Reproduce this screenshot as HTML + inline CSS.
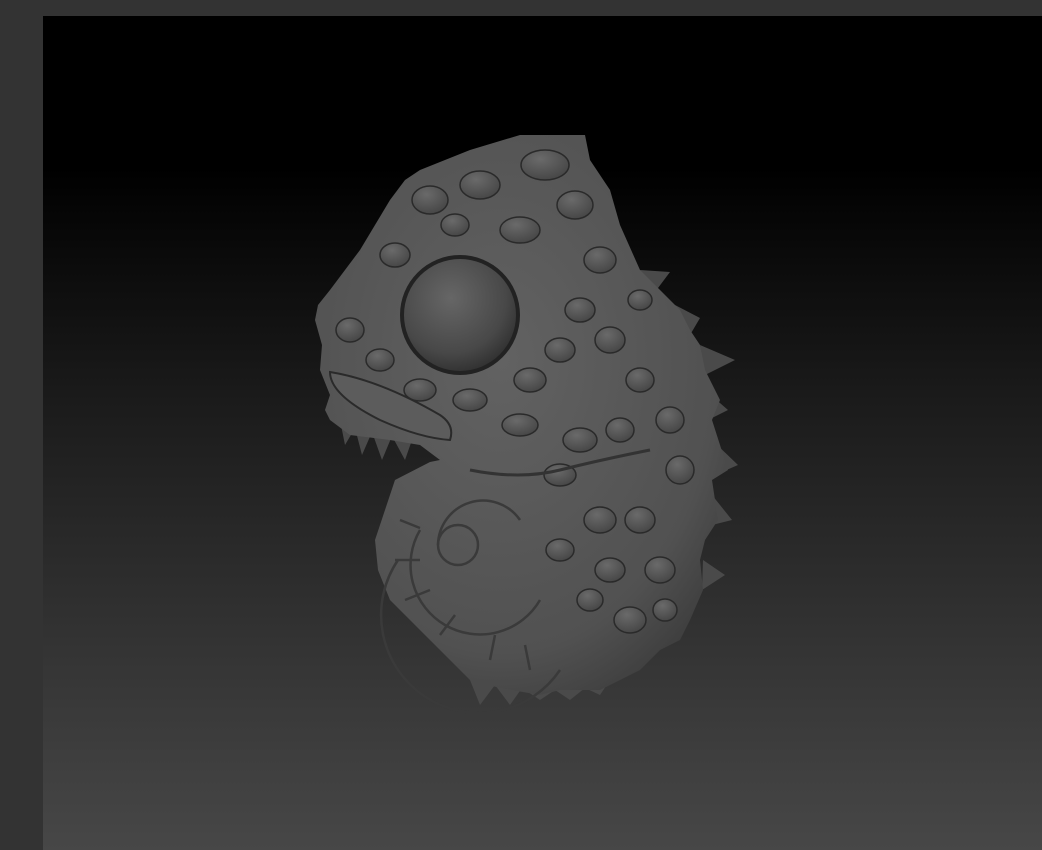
<!DOCTYPE html>
<html><head><meta charset="utf-8"><style>
html,body{margin:0;padding:0;width:1042px;height:850px;overflow:hidden;background:#333;}
#vp{position:absolute;left:43px;top:16px;width:999px;height:834px;background:linear-gradient(#000 0%,#000 18%,#1a1a1a 45%,#333 75%,#474747 100%);}
svg{position:absolute;left:0;top:0}
</style></head><body>
<div id="vp"></div>
<svg width="1042" height="850" viewBox="0 0 1042 850">
<defs>
<radialGradient id="eye" cx="0.42" cy="0.35" r="0.7"><stop offset="0" stop-color="#666"/><stop offset="0.7" stop-color="#484848"/><stop offset="1" stop-color="#2e2e2e"/></radialGradient>
<radialGradient id="body" cx="0.45" cy="0.4" r="0.7"><stop offset="0" stop-color="#626262"/><stop offset="0.75" stop-color="#515151"/><stop offset="1" stop-color="#3a3a3a"/></radialGradient>
<radialGradient id="sc" cx="0.4" cy="0.3" r="0.8"><stop offset="0" stop-color="#6a6a6a"/><stop offset="1" stop-color="#424242"/></radialGradient>
</defs>
<g fill="#4a4a4a">
<path d="M340,420 L345,445 L355,428 L362,455 L372,432 L382,460 L392,436 L405,460 L412,440 L330,410 Z"/>
<path d="M700,345 L735,360 L705,375 Z M705,390 L728,410 L708,420 Z M712,440 L738,465 L715,475 Z M712,495 L732,520 L712,525 Z M703,560 L725,575 L702,590 Z"/>
<path d="M470,680 L480,705 L495,685 L510,705 L522,688 L540,700 L555,690 L570,700 L585,688 L600,695 L610,680 Z"/>
<path d="M640,270 L670,272 L655,292 Z M675,305 L700,318 L690,335 Z"/>
</g>
<path fill="url(#body)" d="M470,150 L520,135 L585,135 L590,160 L610,190 L620,225 L640,270 L660,290 L680,310 L690,330 L700,345 L705,370 L720,400 L712,420 L728,470 L712,480 L718,520 L705,540 L700,560 L703,590 L690,620 L680,640 L660,650 L640,670 L600,690 L560,690 L540,695 L500,688 L470,680 L450,660 L430,640 L410,620 L390,600 L378,570 L375,540 L385,510 L395,480 L430,462 L440,460 L420,445 L390,440 L350,435 L330,420 L325,410 L330,395 L320,370 L322,345 L315,320 L318,305 L330,290 L345,270 L360,250 L375,225 L390,200 L405,180 L420,170 Z"/>
<g fill="url(#sc)" stroke="#2a2a2a" stroke-width="1.5">
<ellipse cx="430" cy="200" rx="18" ry="14"/><ellipse cx="480" cy="185" rx="20" ry="14"/><ellipse cx="545" cy="165" rx="24" ry="15"/><ellipse cx="575" cy="205" rx="18" ry="14"/>
<ellipse cx="395" cy="255" rx="15" ry="12"/><ellipse cx="520" cy="230" rx="20" ry="13"/><ellipse cx="600" cy="260" rx="16" ry="13"/><ellipse cx="580" cy="310" rx="15" ry="12"/>
<ellipse cx="350" cy="330" rx="14" ry="12"/><ellipse cx="380" cy="360" rx="14" ry="11"/><ellipse cx="420" cy="390" rx="16" ry="11"/><ellipse cx="470" cy="400" rx="17" ry="11"/>
<ellipse cx="530" cy="380" rx="16" ry="12"/><ellipse cx="560" cy="350" rx="15" ry="12"/><ellipse cx="610" cy="340" rx="15" ry="13"/><ellipse cx="640" cy="380" rx="14" ry="12"/>
<ellipse cx="520" cy="425" rx="18" ry="11"/><ellipse cx="580" cy="440" rx="17" ry="12"/><ellipse cx="620" cy="430" rx="14" ry="12"/><ellipse cx="670" cy="420" rx="14" ry="13"/>
<ellipse cx="680" cy="470" rx="14" ry="14"/><ellipse cx="560" cy="475" rx="16" ry="11"/><ellipse cx="600" cy="520" rx="16" ry="13"/><ellipse cx="640" cy="520" rx="15" ry="13"/>
<ellipse cx="660" cy="570" rx="15" ry="13"/><ellipse cx="610" cy="570" rx="15" ry="12"/><ellipse cx="560" cy="550" rx="14" ry="11"/><ellipse cx="630" cy="620" rx="16" ry="13"/>
<ellipse cx="455" cy="225" rx="14" ry="11"/><ellipse cx="640" cy="300" rx="12" ry="10"/><ellipse cx="665" cy="610" rx="12" ry="11"/><ellipse cx="590" cy="600" rx="13" ry="11"/>
</g>
<path d="M330,372 Q380,380 440,415 Q455,425 450,440 Q420,438 380,420 Q330,395 330,372 Z" fill="#5c5c5c" stroke="#2a2a2a" stroke-width="2"/>
<path d="M470,470 Q520,480 560,470 Q600,460 650,450" fill="none" stroke="#333" stroke-width="3"/>
<g fill="none" stroke="#3a3a3a" stroke-width="2.5">
<circle cx="458" cy="545" r="20"/><path d="M438,545 A45,45 0 0 1 520,520"/><path d="M420,530 A62,62 0 0 0 540,600"/><path d="M398,560 A85,85 0 0 0 560,670"/>
<path d="M400,520 L420,528 M395,560 L420,560 M405,600 L430,590 M440,635 L455,615 M490,660 L495,635 M530,670 L525,645"/>
</g>
<circle cx="460" cy="315" r="60" fill="#222"/>
<circle cx="460" cy="315" r="56" fill="url(#eye)"/>
</svg>
</body></html>
